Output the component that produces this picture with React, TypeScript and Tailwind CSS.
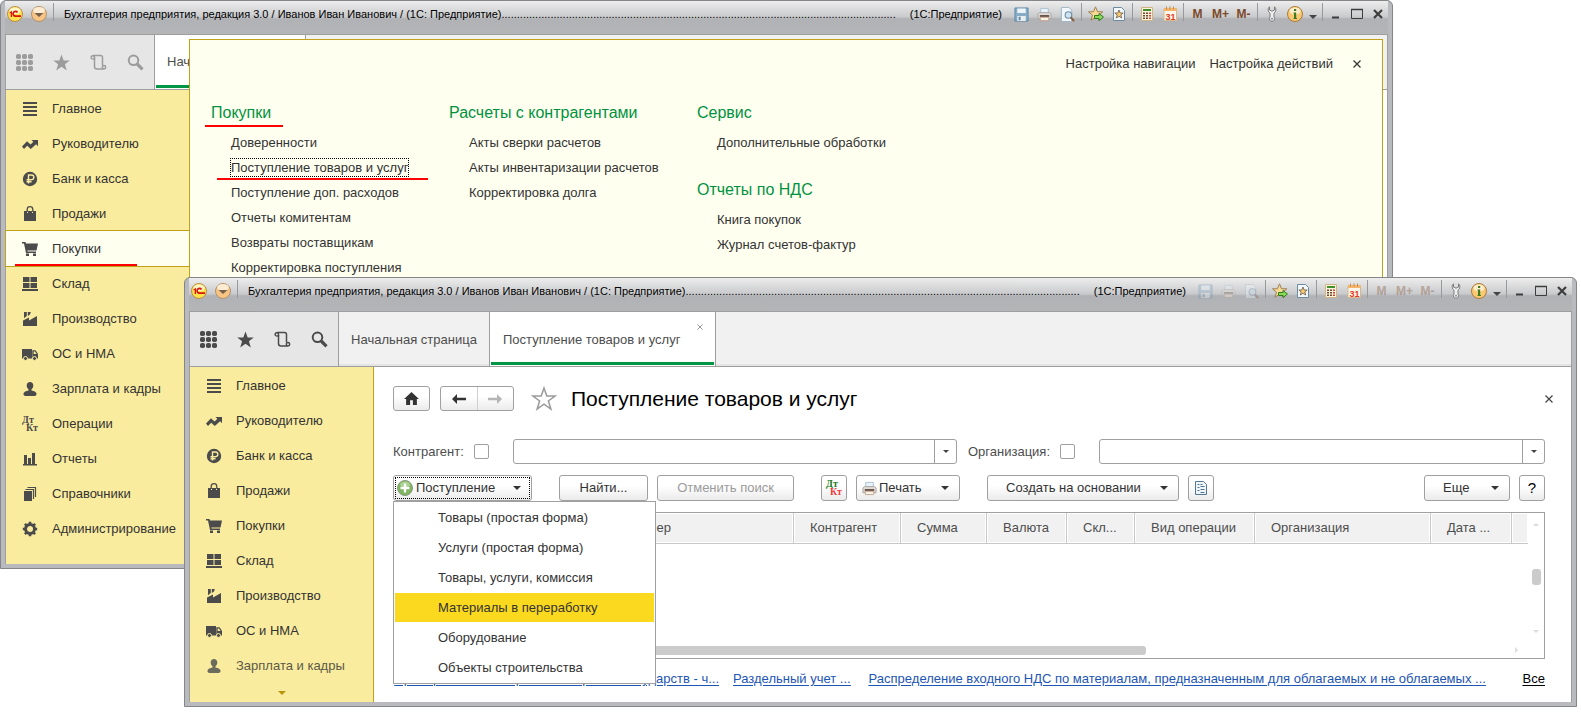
import React, { ReactNode } from "react";

type IconProps = { className?: string };

const MENU_SECTIONS: { label: string; icon: string }[] = [
  { label: "Главное", icon: "lines" },
  { label: "Руководителю", icon: "trend" },
  { label: "Банк и касса", icon: "ruble" },
  { label: "Продажи", icon: "bag" },
  { label: "Покупки", icon: "cart" },
  { label: "Склад", icon: "boxes" },
  { label: "Производство", icon: "factory" },
  { label: "ОС и НМА", icon: "truck" },
  { label: "Зарплата и кадры", icon: "person" },
  { label: "Операции", icon: "dtkt" },
  { label: "Отчеты", icon: "chart" },
  { label: "Справочники", icon: "books" },
  { label: "Администрирование", icon: "gear" },
];

function DtKt({ top, bottom }: { top: string; bottom: string }) {
  return (
    <svg viewBox="0 0 16 16" className="size-4 shrink-0 overflow-visible" aria-hidden="true">
      <text x="0" y="7" fontFamily="Liberation Serif, serif" fontWeight="bold" fontSize="10" fill={top}>Дт</text>
      <text x="4" y="15" fontFamily="Liberation Serif, serif" fontWeight="bold" fontSize="10" fill={bottom}>Кт</text>
    </svg>
  );
}

function SectionIcon({ name }: { name: string }) {
  if (name === "dtkt") return <DtKt top="#4b4b4b" bottom="#4b4b4b" />;
  const shapes: Record<string, ReactNode> = {
    lines: <path d="M1 1h14v2H1zM1 5h14v2H1zM1 9h14v2H1zM1 13h14v2H1z" />,
    trend: <path d="M0 10.500 5 5.200l3.600 3.300 2.700-2.700L9.500 4H16v6.200l-1.900-1.900L8.800 13 5.200 9.700 2 13z" />,
    ruble: (
      <>
        <circle cx="8" cy="8" r="7.200" />
        <path d="M6.500 12.500V4h3a2.300 2.300 0 0 1 0 4.700H4.500M4.500 10.700h5" fill="none" stroke="#faec9e" strokeWidth="1.400" />
      </>
    ),
    bag: (
      <>
        <path d="M2 5h3v2h1V5h4v2h1V5h3v10H2z" />
        <path d="M5.200 6V3.500a2.800 2.800 0 0 1 5.600 0V6" fill="none" stroke="#4b4b4b" strokeWidth="1.300" />
      </>
    ),
    cart: <path d="M0 1h3.500l.5 1.500h12L14.500 9.500H5.300l.3 1h8.400V12H4L2 2.500H0zM4 12.500h3v2.500H4zM11 12.500h3v2.500h-3z" />,
    boxes: <path d="M1 1h6.500v5H1zM8.500 1H15v5H8.500zM1 7h6.500v5H1zM8.500 7H15v5H8.500zM0 13h16v2H0z" />,
    factory: <path d="M1 15V9.500L7 6.500v3L15 5v10zM2 1h2.800v4L2 7.200zM5.800 1h3L8 3.500 5.800 5z" />,
    truck: (
      <>
        <path d="M0 3h10v9.500H0z" />
        <path d="M10.300 4.200h3.200L16 7.800v4.700h-5.700z" />
        <path d="M11.700 5.500h1.300l1.600 2.500h-2.900z" fill="#faec9e" />
        <g stroke="#faec9e" strokeWidth="1"><circle cx="3.500" cy="12.500" r="2" /><circle cx="12.500" cy="12.500" r="2" /></g>
      </>
    ),
    person: <path d="M8 1c2 0 3.300 1.500 3.300 3.500 0 1.700-.8 3-1.800 3.800v1.200c2.500.5 4.700 1.300 5 3 .1 1.500-.5 2-1.500 2.500H3c-1-.5-1.600-1-1.500-2.500.3-1.700 2.500-2.500 5-3V8.300c-1-.8-1.800-2.100-1.800-3.800C4.700 2.500 6 1 8 1z" />,
    chart: <path d="M2 4h3v9h1V7h3v6h1V2h3v11h2v1.500H1V13h1z" />,
    books: (
      <>
        <path d="M2 5h8v10H2z" />
        <path d="M3.500 3.500h8V13M5.500 1.500h8V11" fill="none" stroke="#4b4b4b" strokeWidth="1.200" />
      </>
    ),
    gear: (
      <>
        <circle cx="8" cy="8" r="4.500" fill="none" stroke="#4b4b4b" strokeWidth="3" />
        <path d="M8 .8v2.500M8 12.700v2.500M.8 8h2.500M12.700 8h2.500M2.900 2.900l1.800 1.800M11.300 11.300l1.800 1.800M13.100 2.900l-1.800 1.800M4.700 11.300l-1.800 1.800" stroke="#4b4b4b" strokeWidth="2.600" />
      </>
    ),
  };
  return (
    <svg viewBox="0 0 16 16" className="size-4 shrink-0" fill="#4b4b4b" aria-hidden="true">
      {shapes[name]}
    </svg>
  );
}

function Caret({ className = "" }: IconProps) {
  return (
    <svg viewBox="0 0 8 4" className={`h-1 w-2 shrink-0 ${className}`} fill="currentColor" aria-hidden="true">
      <path d="M0 0h8L4 4z" />
    </svg>
  );
}

function SmallCross({ className = "" }: IconProps) {
  return (
    <svg viewBox="0 0 8 8" className={className} stroke="currentColor" strokeWidth="1.200" aria-hidden="true">
      <path d="M.5.5l7 7M7.500.5l-7 7" />
    </svg>
  );
}

function Printer() {
  return (
    <svg viewBox="0 0 16 16" className="size-[15px] shrink-0" aria-hidden="true">
      <path d="M4 1.500h8v5H4z" fill="#eaf3fa" stroke="#a9c0d2" />
      <path d="M2.500 6h11l1.500 1.500v5H1v-5z" fill="#dedbd8" stroke="#a9a5a1" />
      <path d="M3 8.500h10v2.500H3z" fill="#6b564b" />
      <path d="M3.500 11h9v3.500h-9z" fill="#fbf3ea" stroke="#c2a48e" />
    </svg>
  );
}

function Separator() {
  return <span className="mx-0.5 h-[18px] w-px shrink-0 self-start bg-[#98999b]" />;
}

function TitleBar({ dimmed }: { dimmed?: boolean }) {
  const fade = dimmed ? "opacity-35" : "";
  const tool = "flex w-[23px] items-center justify-center";
  return (
    <header className="flex h-[33px] items-start bg-[linear-gradient(#ededed,#c9cacc_48%,#b1b2b5_54%,#b4b5b7)] pt-0.5">
      <div className="flex h-[22px] w-full items-center text-[11px] leading-4 text-black">
        <button type="button" aria-label="Меню программы" className="ml-0.5 size-4 shrink-0">
          <svg viewBox="0 0 16 16" className="size-4">
            <circle cx="8" cy="8" r="7.500" fill="#ffe14a" stroke="#b98a4e" />
            <ellipse cx="8" cy="4.800" rx="5.500" ry="3.300" fill="#fff6c4" />
            <path d="M2.500 6.500 5 4.800V11H3.700V6.800L2.500 7.500z" fill="#d8120c" />
            <path d="M10.500 6.500A2.400 2.400 0 1 0 8.500 10.200H14" fill="none" stroke="#d8120c" strokeWidth="1.700" />
          </svg>
        </button>
        <button type="button" aria-label="Главное меню" className="ml-2 size-4 shrink-0">
          <svg viewBox="0 0 16 16" className="size-4">
            <circle cx="8" cy="8" r="7.500" fill="#f8c484" stroke="#b0926e" />
            <ellipse cx="8" cy="4.500" rx="5.800" ry="3.400" fill="#fdebd2" />
            <path d="M3.500 7h9L8 11z" fill="#75604c" />
          </svg>
        </button>
        <span className="mr-2.5 ml-1.5 h-[18px] w-px shrink-0 self-start bg-[#98999b]" />
        <span className="shrink-0">
          Бухгалтерия предприятия, редакция 3.0 / Иванов Иван Иванович / (1С: Предприятие)
        </span>
        <span className="min-w-0 flex-1 overflow-hidden" aria-hidden="true">{".".repeat(129)}</span>
        <span className="shrink-0">(1С:Предприятие)</span>
        <div className="ml-2 flex h-full shrink-0 items-center text-[#7c4a2b]">
          <button type="button" aria-label="Сохранить" className={`${tool} ${fade}`}>
            <svg viewBox="0 0 16 16" className="size-[15px]">
              <path d="M1 1h14v14H1z" fill="#86acc6" stroke="#5c87a4" />
              <path d="M3.500 1.500h9v5h-9z" fill="#eef5fa" />
              <path d="M3.500 9.500h9V15h-9z" fill="#e8edf0" />
              <path d="M5 10.500h2v3.500H5z" fill="#5c87a4" />
            </svg>
          </button>
          <button type="button" aria-label="Печать" className={`${tool} ${fade}`}><Printer /></button>
          <button type="button" aria-label="Предварительный просмотр" className={`${tool} ${fade}`}>
            <svg viewBox="0 0 16 16" className="size-[15px]">
              <path d="M1.500.5h8l3 3v12h-11z" fill="#f2f7fb" stroke="#9db4c4" />
              <circle cx="9" cy="8.500" r="3.500" fill="#cfe3f1" stroke="#6f8fa6" strokeWidth="1.200" />
              <path d="M11.500 11l3.500 4" stroke="#8a5a3c" strokeWidth="2.200" />
            </svg>
          </button>
          <Separator />
          <button type="button" aria-label="Добавить в избранное" className={tool}>
            <svg viewBox="0 0 16 16" className="size-4">
              <path d="M7.500.8l2 5h5.300l-4.300 3.400 1.500 5L7.500 11.300 3 14.200l1.500-5L.5 5.800h5z" fill="#fbdb94" stroke="#9c8058" />
              <path d="M6.500 9.500h4.500V7.500l4.500 3.500L11 14.700v-2.200H6.500z" fill="#8ad85a" stroke="#2f7d1c" />
            </svg>
          </button>
          <button type="button" aria-label="Избранное" className={tool}>
            <svg viewBox="0 0 16 16" className="size-4">
              <path d="M2.500 1.500h8l3 3v10h-11z" fill="#f2f7fb" stroke="#6d8ba0" />
              <path d="M8 4l1.200 3h3l-2.400 2 .9 3L8 10.300 5.300 12l.9-3-2.400-2h3z" fill="#f6c973" stroke="#6d5a46" strokeWidth=".8" />
            </svg>
          </button>
          <Separator />
          <button type="button" aria-label="Калькулятор" className={tool}>
            <svg viewBox="0 0 16 16" className="size-4">
              <path d="M2.500 1.500h11v13h-11z" fill="#fdf3da" stroke="#d0b488" />
              <path d="M4 3h8v2H4z" fill="#3f8f2c" />
              <path d="M4 6.500h2v1.500H4zM7 6.500h2v1.500H7zM4 9h2v1.500H4zM7 9h2v1.500H7zM4 11.500h2V13H4zM7 11.500h2V13H7z" fill="#6b4a34" />
              <path d="M10 6.500h2v1.500h-2zM10 9h2v1.500h-2zM10 11.500h2V13h-2z" fill="#d2452f" />
            </svg>
          </button>
          <button type="button" aria-label="Календарь" className={tool}>
            <svg viewBox="0 0 16 16" className="size-4">
              <path d="M2 2.500h12.500v12H2z" fill="#fff7ea" stroke="#d8b890" />
              <path d="M2 2h12.500v3H2z" fill="#f5b56a" />
              <path d="M4.500.5v3M8 .5v3M11.500.5v3" stroke="#c08a50" />
              <text x="3.500" y="13.500" fontFamily="Liberation Sans, sans-serif" fontWeight="bold" fontSize="9" fill="#e23b22">31</text>
            </svg>
          </button>
          <Separator />
          <button type="button" className={`w-[23px] text-[12px] font-bold ${fade}`}>M</button>
          <button type="button" className={`w-[23px] text-[12px] font-bold ${fade}`}>M+</button>
          <button type="button" className={`w-[23px] text-[12px] font-bold ${fade}`}>M-</button>
          <Separator />
          <button type="button" aria-label="Настройка" className={tool}>
            <svg viewBox="0 0 16 16" className="size-4">
              <path d="M5.500.8A4 4 0 0 0 6 7.200V11a2.600 2.600 0 1 0 4 0V7.200A4 4 0 0 0 10.500.8V4L8 5.200 5.500 4z" fill="#efefef" stroke="#7a7a7a" />
              <circle cx="8" cy="12.800" r="1" fill="#8a8a8a" />
            </svg>
          </button>
          <button type="button" aria-label="О программе" className={tool}>
            <svg viewBox="0 0 16 16" className="size-4">
              <circle cx="8" cy="8" r="7.500" fill="#fbc873" stroke="#a97b3c" />
              <ellipse cx="8" cy="5" rx="5.500" ry="3.500" fill="#fdeccb" />
              <path d="M7 3h2.200v2H7zM6.500 6.500h2.700V12H10v1H6.500v-1H7V7.500h-.5z" fill="#3e7d1f" />
            </svg>
          </button>
          <span className="flex w-3.5 justify-center pt-1.5 text-[#444]"><Caret /></span>
          <Separator />
          <button type="button" aria-label="Свернуть" className="flex w-[21px] justify-center text-[#3c3c3c]">
            <svg viewBox="0 0 12 12" className="size-3"><path d="M2 9.500h7" stroke="currentColor" strokeWidth="2" /></svg>
          </button>
          <button type="button" aria-label="Развернуть" className="flex w-[21px] justify-center text-[#3c3c3c]">
            <svg viewBox="0 0 12 12" className="size-3"><path d="M.5 1.500h11v9H.5z" fill="none" stroke="currentColor" /><path d="M0 1.500h12" stroke="currentColor" strokeWidth="1.500" /></svg>
          </button>
          <button type="button" aria-label="Закрыть" className="flex w-[21px] justify-center text-[#3c3c3c]">
            <svg viewBox="0 0 12 12" className="size-3"><path d="M2 2l8 8M10 2l-8 8" stroke="currentColor" strokeWidth="2.200" /></svg>
          </button>
        </div>
      </div>
    </header>
  );
}

function QuickTools({ color }: { color: string }) {
  return (
    <div className={`flex w-[149px] shrink-0 items-center gap-5 border-r border-[#9e9e9e] bg-[#e6e6e6] pl-2.5 ${color}`}>
      <button type="button" aria-label="Разделы">
        <svg viewBox="0 0 17 17" className="size-[17px]" fill="currentColor">
          {[2.5, 8.5, 14.5].flatMap((y) => [2.5, 8.5, 14.5].map((x) => <rect key={`${x}-${y}`} x={x - 2.5} y={y - 2.5} width="5" height="5" rx="1.8" />))}
        </svg>
      </button>
      <button type="button" aria-label="Избранное">
        <svg viewBox="0 0 17 17" className="size-[17px]" fill="currentColor"><path d="M8.500.5l2.200 6h6.100l-4.900 3.800 1.900 6.200-5.300-3.800-5.300 3.800 1.900-6.200L.2 6.500h6.100z" /></svg>
      </button>
      <button type="button" aria-label="История">
        <svg viewBox="0 0 17 17" className="size-[17px]" fill="none" stroke="currentColor" strokeWidth="1.500">
          <path d="M2.500 5h2v7.500a2.500 2.500 0 0 0 2.500 2.500h6.500" />
          <path d="M4.500 5.200V3.200A1.700 1.700 0 1 0 2.500 5M3 1.500h7.500a2 2 0 0 1 2 2v8" />
          <circle cx="14" cy="13.300" r="1.700" />
        </svg>
      </button>
      <button type="button" aria-label="Поиск">
        <svg viewBox="0 0 17 17" className="size-[17px]" fill="none" stroke="currentColor">
          <circle cx="6.500" cy="6.300" r="4.800" strokeWidth="2" />
          <path d="M10.200 10l5.300 5.300" strokeWidth="3.200" />
        </svg>
      </button>
    </div>
  );
}

function Sections({ count, active, fadeLast }: { count: number; active?: string; fadeLast?: boolean }) {
  return (
    <ul className="pt-px">
      {MENU_SECTIONS.slice(0, count).map((s, i) => {
        const on = s.label === active;
        return (
          <li key={s.label}>
            <button
              type="button"
              className={`relative flex h-[35px] w-full items-center gap-3.5 pl-4 text-[13px] text-[#333] ${on ? "bg-[#fffff0] outline outline-[#bfa21a]" : ""} ${fadeLast && i === count - 1 ? "opacity-80" : ""}`}
            >
              <SectionIcon name={s.icon} />
              <span className="whitespace-nowrap">{s.label}</span>
              {on && <span className="absolute bottom-0 left-[9px] h-0.5 w-[122px] bg-[#ff0000]" />}
            </button>
          </li>
        );
      })}
    </ul>
  );
}

function Frame({ place, children }: { place: string; children: ReactNode }) {
  return (
    <section className={`absolute overflow-hidden rounded-t-[6px] border border-[#85868a] bg-[#b9babd] px-[4px] pb-[4px] ${place}`}>
      <div className="text-[13px]">{children}</div>
    </section>
  );
}

function LinkGroup({ title, items, marked }: { title: string; items: string[]; marked?: string }) {
  return (
    <div>
      <h2 className="relative w-fit text-[16px] leading-6 text-[#00923f]">
        {title}
        {marked && <span className="absolute -right-3 -bottom-0.5 -left-1.5 h-0.5 bg-[#ff0000]" />}
      </h2>
      <ul className="mt-[5px] pl-5">
        {items.map((t) => (
          <li key={t} className="flex h-[25px] items-center">
            <a href="#" className={`relative leading-[17px] whitespace-nowrap text-[#333] ${t === marked ? "outline-1 outline-dotted outline-black" : ""}`}>
              {t}
              {t === marked && <span className="absolute -right-5 -bottom-1 -left-3.5 h-0.5 bg-[#ff0000]" />}
            </a>
          </li>
        ))}
      </ul>
    </div>
  );
}

const BTN = "flex shrink-0 items-center rounded-[3px] border border-[#a0a0a0] bg-linear-to-b from-white from-40% to-[#ebebeb] text-[#333]";

function BackWindow() {
  return (
    <Frame place="left-0 right-[188px] top-0">
      <TitleBar />
      <div className="border border-b-0 border-[#9e9e9e]">
        <div className="flex h-[55px] border-b border-[#9e9e9e] bg-[#f1f1f1]">
          <QuickTools color="text-[#9c9c9c]" />
          <div className="relative flex w-[151px] items-center border-r border-[#9e9e9e] bg-white">
            <span className="pl-3 text-[#4d4d4d]">Начальная страница</span>
            <span className="absolute inset-x-px bottom-px h-[3px] bg-[#009646]" />
          </div>
        </div>
        <div className="flex bg-white">
          <nav className="w-[184px] bg-[#faec9e] pb-[18px]">
            <Sections count={13} active="Покупки" />
          </nav>
        </div>
      </div>
      <div className="absolute top-[38px] right-[9px] bottom-1 left-[188px] border border-[#bfa21a] bg-[#fffff0]">
        <div className="flex h-12 items-center justify-end gap-3.5 pr-[21px] text-[#333]">
          <a href="#">Настройка навигации</a>
          <a href="#">Настройка действий</a>
          <button type="button" aria-label="Закрыть панель" className="ml-1.5"><SmallCross className="size-2" /></button>
        </div>
        <div className="flex pt-[13px] pl-[21px]">
          <div className="w-[238px]">
            <LinkGroup
              title="Покупки"
              marked="Поступление товаров и услуг"
              items={["Доверенности", "Поступление товаров и услуг", "Поступление доп. расходов", "Отчеты комитентам", "Возвраты поставщикам", "Корректировка поступления"]}
            />
          </div>
          <div className="w-[248px]">
            <LinkGroup title="Расчеты с контрагентами" items={["Акты сверки расчетов", "Акты инвентаризации расчетов", "Корректировка долга"]} />
          </div>
          <div className="flex flex-col gap-[23px]">
            <LinkGroup title="Сервис" items={["Дополнительные обработки"]} />
            <LinkGroup title="Отчеты по НДС" items={["Книга покупок", "Журнал счетов-фактур"]} />
          </div>
        </div>
      </div>
    </Frame>
  );
}

function Filter({ id, label }: { id: string; label: string }) {
  return (
    <>
      <label htmlFor={`${id}-on`} className="shrink-0 text-[#4d4d4d]">{label}</label>
      <input id={`${id}-on`} type="checkbox" className="ml-2.5 size-[15px] shrink-0 appearance-none rounded-[2px] border border-[#a0a0a0] bg-white" />
      <div className="ml-6 flex h-[25px] min-w-0 flex-1 rounded-[3px] border border-[#a0a0a0] bg-white">
        <input type="text" aria-label={label} className="min-w-0 flex-1 px-2 outline-none" />
        <button type="button" aria-label="Выбрать из списка" className="flex w-[22px] items-center justify-center border-l border-[#a0a0a0] text-[#444]">
          <svg viewBox="0 0 6 3" className="h-[3px] w-1.5" fill="currentColor"><path d="M0 0h6L3 3z" /></svg>
        </button>
      </div>
    </>
  );
}

const COLUMNS: { label: string; width: string }[] = [
  { label: "Дата", width: "" },
  { label: "Номер", width: "w-[179px]" },
  { label: "Контрагент", width: "w-[107px]" },
  { label: "Сумма", width: "w-[86px]" },
  { label: "Валюта", width: "w-[80px]" },
  { label: "Скл...", width: "w-[68px]" },
  { label: "Вид операции", width: "w-[120px]" },
  { label: "Организация", width: "w-[176px]" },
  { label: "Дата ...", width: "w-[81px]" },
  { label: "", width: "w-4" },
];

const RECEIPT_KINDS = ["Товары (простая форма)", "Услуги (простая форма)", "Товары, услуги, комиссия", "Материалы в переработку", "Оборудование", "Объекты строительства"];

function FrontWindow() {
  return (
    <Frame place="left-[184px] right-1 top-[277px]">
      <TitleBar dimmed />
      <div className="border border-b-0 border-[#9e9e9e]">
        <div className="flex h-[55px] border-b border-[#9e9e9e] bg-[#f1f1f1] text-[#4d4d4d] shadow-[inset_0_-2px_0_#e4e4e4]">
          <QuickTools color="text-[#4b4b4b]" />
          <button type="button" className="w-[151px] border-r border-[#9e9e9e] pt-0.5 text-center">Начальная страница</button>
          <div className="relative flex w-[226px] items-center border-r border-[#9e9e9e] bg-white pt-0.5 pl-[13px]">
            <button type="button">Поступление товаров и услуг</button>
            <button type="button" aria-label="Закрыть вкладку" className="absolute top-3 right-3 text-[#8a8a8a]"><SmallCross className="size-1.5" /></button>
            <span className="absolute inset-x-px bottom-px h-[3px] bg-[#009646]" />
          </div>
        </div>
        <div className="flex bg-white">
          <nav className="w-[184px] shrink-0 border-r border-[#bfa21a] bg-[#faec9e]">
            <Sections count={9} fadeLast />
            <button type="button" aria-label="Еще разделы" className="flex h-[19px] w-full items-center justify-center text-[#b8960c]">
              <Caret />
            </button>
          </nav>
          <main className="flex min-w-0 flex-1 flex-col pt-[19px] pr-[26px] pl-[19px]">
            <div className="flex h-[25px] items-center">
              <button type="button" aria-label="Домой" className={`${BTN} h-[25px] w-[37px] justify-center`}>
                <svg viewBox="0 0 16 14" className="h-[13px] w-[15px]" fill="#333"><path d="M8 0l8 7.500h-2.200V14H9.500V9h-3v5H2.200V7.500H0z" /></svg>
              </button>
              <div className={`${BTN} ml-2.5 h-[25px] w-[74px]`}>
                <button type="button" aria-label="Назад" className="flex h-full flex-1 items-center justify-center border-r border-[#d0d0d0]">
                  <svg viewBox="0 0 14 10" className="h-2.5 w-3.5" fill="#333"><path d="M0 5l5-5v3.800h9v2.400H5V10z" /></svg>
                </button>
                <button type="button" aria-label="Вперед" className="flex h-full flex-1 items-center justify-center">
                  <svg viewBox="0 0 14 10" className="h-2.5 w-3.5" fill="#b5b5b5"><path d="M14 5L9 0v3.800H0v2.400h9V10z" /></svg>
                </button>
              </div>
              <button type="button" aria-label="В избранное" className="ml-[17px]">
                <svg viewBox="0 0 26 26" className="size-[26px]" fill="none" stroke="#9a9a9a" strokeWidth="1.500"><path d="M13 2l2.800 8h8.200l-6.600 5 2.500 8.200L13 18.200l-6.900 5L8.600 15 2 10h8.200z" /></svg>
              </button>
              <h1 className="ml-[14px] text-[21px] text-black">Поступление товаров и услуг</h1>
              <button type="button" aria-label="Закрыть" className="-mr-2 ml-auto text-[#444]"><SmallCross className="size-2" /></button>
            </div>
            <div className="mt-[28px] flex items-center gap-[11px]">
              <div className="flex flex-[564] items-center">
                <Filter id="partner" label="Контрагент:" />
              </div>
              <div className="flex flex-[577] items-center">
                <Filter id="company" label="Организация:" />
              </div>
            </div>
            <div className="relative mt-[11px] flex h-[26px]">
              <button type="button" className={`${BTN} w-[139px] p-px`} aria-expanded="true">
                <span className="flex h-full w-full items-center border border-dotted border-black pr-2 pl-px">
                  <svg viewBox="0 0 16 16" className="size-4 shrink-0">
                    <circle cx="8" cy="8" r="7.500" fill="#7fb560" stroke="#8a9a80" />
                    <ellipse cx="8" cy="4.500" rx="5" ry="3" fill="#a9d18f" />
                    <path d="M8 3.500v9M3.500 8h9" stroke="#fff" strokeWidth="2.400" />
                  </svg>
                  <span className="pl-[3px]">Поступление</span>
                  <Caret className="ml-auto" />
                </span>
              </button>
              <button type="button" className={`${BTN} ml-[27px] w-[89px] justify-center`}>Найти...</button>
              <button type="button" disabled className={`${BTN} ml-[9px] w-[137px] justify-center`}><span className="text-[#9b9b9b]">Отменить поиск</span></button>
              <button type="button" aria-label="Дебет и кредит" className={`${BTN} ml-[27px] w-[26px] justify-center`}><DtKt top="#1a7a1a" bottom="#f03a3a" /></button>
              <button type="button" className={`${BTN} ml-[9px] w-[104px] pr-2.5 pl-[5px]`}>
                <Printer />
                <span className="pl-0.5">Печать</span>
                <Caret className="ml-auto" />
              </button>
              <button type="button" className={`${BTN} ml-[27px] w-[192px] pr-2.5 pl-[18px]`}>
                Создать на основании
                <Caret className="ml-auto" />
              </button>
              <button type="button" aria-label="Отчет" className={`${BTN} ml-[9px] w-[26px] justify-center`}>
                <svg viewBox="0 0 14 16" className="h-4 w-3.5" fill="none" stroke="#56778f">
                  <path d="M1.500 1.500h8l3 3v10h-11z" fill="#eef5fa" />
                  <path d="M3.500 4.500h2M3.500 7.500h2M3.500 10.500h2M6.500 6.500h4M6.500 9.500h4M6.500 12.500h4M6.500 4.500h2" />
                </svg>
              </button>
              <button type="button" className={`${BTN} ml-auto w-[86px] pr-2.5 pl-[18px]`}>
                Еще
                <Caret className="ml-auto" />
              </button>
              <button type="button" aria-label="Справка" className={`${BTN} ml-[9px] w-[26px] justify-center`}><span className="text-[15px] text-black">?</span></button>
              <ul className="absolute top-full left-0 z-10 w-[263px] border border-[#a0a0a0] bg-white p-px pb-0">
                {RECEIPT_KINDS.map((t) => (
                  <li key={t} className="h-[30px]">
                    <button type="button" className={`flex h-[29px] w-full items-center pl-[43px] text-[#333] ${t === "Материалы в переработку" ? "bg-[#fbd91f]" : ""}`}>{t}</button>
                  </li>
                ))}
              </ul>
            </div>
            <div className="relative mt-[11px] h-[147px] overflow-hidden border border-[#a0a0a0] bg-white pr-4">
              <table className="w-full table-fixed border-separate border-spacing-0">
                <thead>
                  <tr>
                    {COLUMNS.map((c, i) => (
                      <th key={i} scope="col" className={`h-[31px] overflow-hidden border-b border-[#c8c8c8] bg-[#f1f1f1] p-0 text-left font-normal whitespace-nowrap text-[#4d4d4d] shadow-[inset_0_0_0_1px_#fff] ${i < COLUMNS.length - 1 ? "border-r pl-4" : ""} ${c.width}`}>
                        {c.label}
                      </th>
                    ))}
                  </tr>
                </thead>
              </table>
              <span className="absolute right-[398px] bottom-[3px] left-3 h-[9px] rounded-[3px] bg-[#cbcbcb]" />
              <span className="absolute top-14 right-[3px] h-4 w-[9px] rounded-[3px] bg-[#cbcbcb]" />
              <svg viewBox="0 0 6 3" className="absolute top-2.5 right-[5px] h-[3px] w-1.5" fill="#dcdcdc"><path d="M0 3h6L3 0z" /></svg>
              <svg viewBox="0 0 6 3" className="absolute right-[5px] bottom-[25px] h-[3px] w-1.5" fill="#dcdcdc"><path d="M0 0h6L3 3z" /></svg>
              <svg viewBox="0 0 3 6" className="absolute right-[26px] bottom-[5px] h-1.5 w-[3px]" fill="#dcdcdc"><path d="M0 0v6l3-3z" /></svg>
            </div>
            <div className="mt-[11px] flex items-center pb-[14px] leading-[18px] whitespace-nowrap text-[#1d55b5] underline underline-offset-2">
              <a href="#" className="flex w-[326px] shrink-0 justify-end overflow-hidden">Приобретение импортных товаров из государств - ч...</a>
              <a href="#" className="ml-3.5 shrink-0">Раздельный учет ...</a>
              <a href="#" className="ml-[18px] shrink-0">Распределение входного НДС по материалам, предназначенным для облагаемых и не облагаемых ...</a>
              <a href="#" className="ml-auto text-black">Все</a>
            </div>
          </main>
        </div>
      </div>
    </Frame>
  );
}

export default function App() {
  return (
    <div className="relative min-h-screen overflow-hidden bg-white font-['Liberation_Sans',Arial,sans-serif]">
      <BackWindow />
      <FrontWindow />
    </div>
  );
}
